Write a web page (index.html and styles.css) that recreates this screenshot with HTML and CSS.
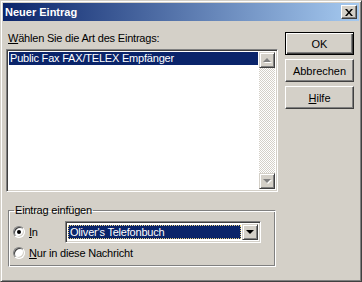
FILE: index.html
```html
<!DOCTYPE html>
<html lang="de">
<head>
  <meta charset="UTF-8" />
  <title>Neuer Eintrag</title>
  <link rel="stylesheet" href="styles.css">
</head>
<body>

  <div class="window">
    <div class="titlebar">
      <span class="title">Neuer Eintrag</span>
      <button class="close-btn">
        <svg width="8" height="7" viewBox="0 0 8 7"><path d="M0 0h2l2 2.5L6 0h2L5 3.5 8 7H6L4 4.5 2 7H0l3-3.5z" fill="#000"/></svg>
      </button>
    </div>

    <div class="client">
      <div class="left">
        <div class="label"><u>W</u>ählen Sie die Art des Eintrags:</div>
        <div class="listbox">
          <div class="items">
            <div class="item selected">Public Fax FAX/TELEX Empfänger</div>
          </div>
          <div class="scrollbar">
            <div class="sb-btn"><span class="arrow up"></span></div>
            <div class="sb-track"></div>
            <div class="sb-btn"><span class="arrow down"></span></div>
          </div>
        </div>

        <fieldset class="group">
          <legend>Eintrag einfügen</legend>
          <div class="row">
            <span class="radio checked"></span>
            <span class="radio-label"><u>I</u>n</span>
            <div class="combo">
              <div class="combo-text"><span>Oliver's Telefonbuch</span></div>
              <div class="combo-btn"><span class="arrow down dark"></span></div>
            </div>
          </div>
          <div class="row">
            <span class="radio"></span>
            <span class="radio-label"><u>N</u>ur in diese Nachricht</span>
          </div>
        </fieldset>
      </div>

      <div class="right">
        <button class="btn default">OK</button>
        <button class="btn">Abbrechen</button>
        <button class="btn"><u>H</u>ilfe</button>
      </div>
    </div>
  </div>

</body>
</html>
```

FILE: styles.css
```css
* {
  box-sizing: border-box;
}

body {
  margin: 0;
  background: #d4d0c8;
  font-family: 'Liberation Sans', Arial, sans-serif;
  font-size: 11px;
  letter-spacing: -0.2px;
  color: #000;
}

u {
  text-decoration: underline;
  text-underline-offset: 1px;
}

.window {
  width: 362px;
  height: 282px;
  background: #d4d0c8;
  border: 1px solid;
  border-color: #d4d0c8 #404040 #404040 #d4d0c8;
  box-shadow: inset 1px 1px #fff, inset -1px -1px #808080;
  padding: 2px;
  display: flex;
  flex-direction: column;
}

.titlebar {
  height: 18px;
  background: linear-gradient(to right, #0a246a, #a6caf0);
  display: flex;
  align-items: center;
  justify-content: space-between;
  padding: 0 2px 0 2px;
}

.title {
  color: #fff;
  font-weight: bold;
  font-size: 11px;
  letter-spacing: 0;
}

.close-btn {
  width: 16px;
  height: 14px;
  padding: 0;
  background: #d4d0c8;
  border: 1px solid;
  border-color: #fff #404040 #404040 #fff;
  box-shadow: inset -1px -1px #808080;
  display: flex;
  align-items: center;
  justify-content: center;
}

.client {
  flex: 1;
  display: flex;
  padding: 11px 0 0 3px;
}

.left {
  width: 272px;
  display: flex;
  flex-direction: column;
}

.label {
  height: 15px;
  line-height: 13px;
  padding-left: 2px;
  margin-bottom: 2px;
}

.listbox {
  height: 143px;
  display: flex;
  border: 1px solid;
  border-color: #808080 #fff #fff #808080;
  box-shadow: inset 1px 1px #404040, inset -1px -1px #d4d0c8;
  padding: 2px;
  background: #fff;
}

.items {
  flex: 1;
}

.item {
  height: 13px;
  line-height: 13px;
  padding-left: 1px;
}

.item.selected {
  background: #0a246a;
  color: #fff;
}

.scrollbar {
  width: 16px;
  display: flex;
  flex-direction: column;
  margin: 0 0 0 1px;
}

.sb-track {
  flex: 1;
  background-color: #fff;
  background-image: repeating-conic-gradient(#d4d0c8 0 25%, #fff 0 50%);
  background-size: 2px 2px;
}

.sb-btn,
.combo-btn {
  width: 16px;
  height: 16px;
  background: #d4d0c8;
  border: 1px solid;
  border-color: #d4d0c8 #404040 #404040 #d4d0c8;
  box-shadow: inset 1px 1px #fff, inset -1px -1px #808080;
  display: flex;
  align-items: center;
  justify-content: center;
}

.arrow {
  width: 0;
  height: 0;
  border-left: 4px solid transparent;
  border-right: 4px solid transparent;
}

.arrow.up {
  border-bottom: 4px solid #808080;
  filter: drop-shadow(1px 1px 0 #fff);
}

.arrow.down {
  border-top: 4px solid #808080;
  filter: drop-shadow(1px 1px 0 #fff);
}

.arrow.down.dark {
  border-top-color: #000;
  filter: none;
}

.group {
  margin: 12px 2px 0 2px;
  height: 63px;
  border: 1px solid;
  border-color: #808080 #fff #fff #808080;
  box-shadow: inset 1px 1px #fff, inset -1px -1px #808080;
  padding: 4px 4px 0 4px;
}

.group legend {
  padding: 0 1px;
  margin-left: 1px;
}

.row {
  display: flex;
  align-items: center;
  height: 23px;
}

.row + .row {
  height: 20px;
}

.radio {
  width: 12px;
  height: 12px;
  border-radius: 50%;
  background: #fff;
  border: 1px solid;
  border-color: #808080 #fff #fff #808080;
  box-shadow: inset 1px 1px #404040, inset -1px -1px #d4d0c8;
  display: flex;
  align-items: center;
  justify-content: center;
  margin-right: 4px;
}

.radio.checked::after {
  content: "";
  width: 4px;
  height: 4px;
  border-radius: 50%;
  background: #000;
}

.radio-label {
  width: 36px;
}

.row + .row .radio-label {
  width: auto;
}

.combo {
  width: 196px;
  height: 22px;
  display: flex;
  border: 1px solid;
  border-color: #808080 #fff #fff #808080;
  box-shadow: inset 1px 1px #404040, inset -1px -1px #d4d0c8;
  padding: 2px;
  background: #fff;
}

.combo-text {
  flex: 1;
  padding: 1px 1px 1px 0;
}

.combo-text span {
  display: block;
  height: 100%;
  background: #0a246a;
  color: #fff;
  outline: 1px dotted #e8d080;
  outline-offset: -1px;
  line-height: 14px;
  padding-left: 2px;
}

.right {
  padding: 0 0 0 7px;
  display: flex;
  flex-direction: column;
}

.btn {
  width: 69px;
  height: 23px;
  margin-bottom: 4px;
  font-family: inherit;
  font-size: 11px;
  letter-spacing: 0;
  padding: 0;
  background: #d4d0c8;
  border: 1px solid;
  border-color: #fff #404040 #404040 #fff;
  box-shadow: inset -1px -1px #808080;
  color: #000;
}

.btn.default {
  border: 1px solid #000;
  box-shadow: inset 1px 1px #fff, inset -1px -1px #404040, inset -2px -2px #808080;
}
```
